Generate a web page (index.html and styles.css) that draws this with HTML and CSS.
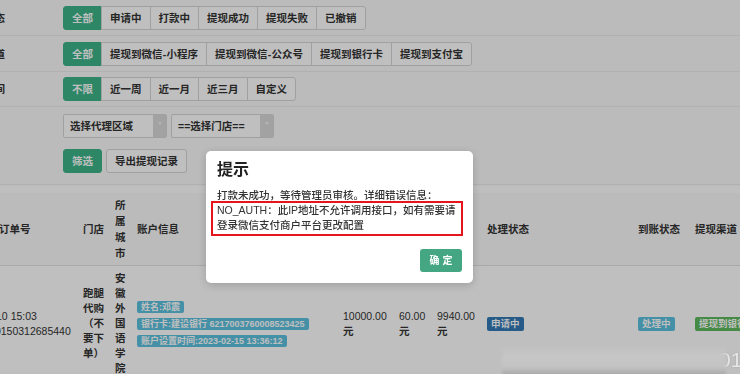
FILE: index.html
```html
<!DOCTYPE html>
<html lang="zh-CN">
<head>
<meta charset="utf-8">
<title>提现记录</title>
<link rel="stylesheet" href="styles.css">
</head>
<body>
<div class="page">
  <div class="filters">
    <div class="frow">
      <div class="flabel">提现状态</div>
      <div class="btn-group">
        <span class="btn active">全部</span>
        <span class="btn">申请中</span>
        <span class="btn">打款中</span>
        <span class="btn">提现成功</span>
        <span class="btn">提现失败</span>
        <span class="btn">已撤销</span>
      </div>
    </div>
    <div class="frow">
      <div class="flabel">提现渠道</div>
      <div class="btn-group">
        <span class="btn active">全部</span>
        <span class="btn">提现到微信<span class="dash">-</span>小程序</span>
        <span class="btn">提现到微信<span class="dash">-</span>公众号</span>
        <span class="btn">提现到银行卡</span>
        <span class="btn">提现到支付宝</span>
      </div>
    </div>
    <div class="frow">
      <div class="flabel">申请时间</div>
      <div class="btn-group">
        <span class="btn active">不限</span>
        <span class="btn">近一周</span>
        <span class="btn">近一月</span>
        <span class="btn">近三月</span>
        <span class="btn">自定义</span>
      </div>
    </div>
    <div class="frow frow-last">
      <div class="flabel"></div>
      <div class="fstack">
        <div class="selects">
          <div class="select"><span class="select-text">选择代理区域</span><span class="select-arrow"><i class="caret"></i></span></div>
          <div class="select"><span class="select-text">==选择门店==</span><span class="select-arrow"><i class="caret"></i></span></div>
        </div>
        <div class="actions">
          <span class="btn btn-green">筛选</span>
          <span class="btn btn-single">导出提现记录</span>
        </div>
      </div>
    </div>
  </div>

  <div class="table-wrap">
    <table class="tbl">
      <colgroup>
        <col class="c1"><col class="c2"><col class="c3"><col class="c4"><col class="c5">
        <col class="c6"><col class="c7"><col class="c8"><col class="c9"><col class="c10">
      </colgroup>
      <thead>
        <tr>
          <th>提现时间/订单号</th>
          <th>门店</th>
          <th>所属城市</th>
          <th>账户信息</th>
          <th>提现金额</th>
          <th>手续费</th>
          <th>实际到账</th>
          <th>处理状态</th>
          <th>到账状态</th>
          <th>提现渠道</th>
        </tr>
      </thead>
      <tbody>
        <tr>
          <td>2023-02-10 15:03<br>20230210150312685440</td>
          <td class="cjk">跑腿代购（不要下单）</td>
          <td class="cjk">安徽外国语学院</td>
          <td>
            <div class="acct">
              <span class="tag tag-info">姓名:邓震</span>
              <span class="tag tag-info">银行卡:建设银行 6217003760008523425</span>
              <span class="tag tag-info">账户设置时间:2023-02-15 13:36:12</span>
            </div>
          </td>
          <td>10000.00<br><span class="cjk">元</span></td>
          <td>60.00<br><span class="cjk">元</span></td>
          <td>9940.00<br><span class="cjk">元</span></td>
          <td><span class="tag tag-lg tag-primary">申请中</span></td>
          <td><span class="tag tag-lg tag-info">处理中</span></td>
          <td><span class="tag tag-lg tag-success">提现到银行卡</span></td>
        </tr>
      </tbody>
    </table>
  </div>
</div>

<div class="backdrop"></div>
<div class="wm">01</div>
<div class="blur-strip"></div>

<div class="modal">
  <div class="modal-title">提示</div>
  <div class="modal-body">
    <div class="msg">打款未成功，等待管理员审核。详细错误信息：</div>
    <div class="msg-box">NO_AUTH：此IP地址不允许调用接口，如有需要请<br>登录微信支付商户平台更改配置</div>
  </div>
  <div class="modal-foot">
    <span class="btn-ok">确 定</span>
  </div>
</div>
</body>
</html>
```

FILE: styles.css
```css
* { box-sizing: border-box; }

html, body {
  margin: 0;
  padding: 0;
  width: 740px;
  height: 374px;
  overflow: hidden;
  background: #fafafa;
  font-family: "Liberation Sans", "Noto Sans CJK SC", sans-serif;
  font-size: 10.5px;
  color: #333;
}

.page {
  width: 740px;
}

.filters {
  padding-top: 0.5px;
}

.frow {
  display: flex;
  align-items: flex-start;
  padding: 5.5px 0 5px;
  border-bottom: 1px solid #ececec;
}

.frow-last {
  padding: 6.5px 0 11px;
}

.flabel {
  width: 5px;
  margin-right: 58px;
  display: flex;
  justify-content: flex-end;
  white-space: nowrap;
  line-height: 24px;
  font-weight: 600;
  flex-shrink: 0;
}

.btn-group {
  display: flex;
}

.btn {
  display: inline-block;
  height: 24px;
  line-height: 22px;
  padding: 0 8px;
  border: 1px solid #d6d6d6;
  background: #ffffff;
  color: #333;
  font-weight: 600;
  white-space: nowrap;
}

.btn-group .btn + .btn {
  margin-left: -1px;
}

.btn-group .btn:first-child {
  border-radius: 3px 0 0 3px;
}

.btn-group .btn:last-child {
  border-radius: 0 3px 3px 0;
}

.btn.active,
.btn-green {
  background: #3cb58a;
  border-color: #3cb58a;
  color: #ffffff;
}

.btn-green,
.btn-single {
  border-radius: 3px;
}

.dash {
  display: inline-block;
  font-family: "Liberation Sans", sans-serif;
  width: 4px;
  text-align: center;
}

.fstack {
  display: flex;
  flex-direction: column;
  gap: 11px;
}

.selects {
  display: flex;
  gap: 4px;
}

.select {
  display: flex;
  width: 104px;
  height: 24px;
  border: 1px solid #d6d6d6;
  background: #ffffff;
  border-radius: 2px;
}

.select + .select {
  width: 103px;
}

.select-text {
  flex: 1;
  line-height: 22px;
  padding-left: 6px;
  font-weight: 600;
  white-space: nowrap;
}

.select-arrow {
  width: 13px;
  background: #d9d9d9;
  display: flex;
  justify-content: center;
  padding-top: 7px;
}

.caret {
  width: 0;
  height: 0;
  border-left: 2px solid transparent;
  border-right: 2px solid transparent;
  border-top: 3px solid #f2f2f2;
}

.actions {
  display: flex;
  gap: 4px;
}

.table-wrap {
  margin-top: 1px;
  background: #ffffff;
  padding-top: 7px;
}

.tbl {
  table-layout: fixed;
  width: 852px;
  margin-left: -52px;
  border-collapse: collapse;
}

.c1 { width: 129px; }
.c2 { width: 32px; }
.c3 { width: 22px; }
.c4 { width: 206px; }
.c5 { width: 56px; }
.c6 { width: 38px; }
.c7 { width: 50px; }
.c8 { width: 151px; }
.c9 { width: 57px; }
.c10 { width: 111px; }

.tbl th {
  background: #fafafa;
  text-align: left;
  font-weight: 600;
  line-height: 16px;
  padding: 4px 5px 4px 6px;
  vertical-align: middle;
  border-bottom: 1px solid #e2e2e2;
  color: #333;
}

.tbl td {
  background: #ffffff;
  line-height: 15px;
  padding: 5.5px 5px 5.5px 6px;
  vertical-align: middle;
  white-space: normal;
  color: #333;
}

.cjk {
  font-weight: 600;
}

.tbl td:first-child,
.tbl th:first-child {
  white-space: nowrap;
}

.acct {
  display: flex;
  flex-direction: column;
  align-items: flex-start;
  gap: 5px;
}

.tag {
  display: inline-block;
  font-size: 9px;
  font-weight: bold;
  line-height: 12px;
  padding: 0 4px;
  border-radius: 2px;
  color: #ffffff;
  white-space: nowrap;
}

.tag-lg {
  font-size: 9.5px;
  line-height: 14px;
}

.tag-info { background: #5bc0de; }
.tag-primary { background: #337ab7; }
.tag-success { background: #5cb85c; }

.backdrop {
  position: fixed;
  inset: 0;
  background: rgba(0, 0, 0, 0.25);
}

.wm {
  position: fixed;
  left: 719px;
  top: 348px;
  font-size: 21px;
  line-height: 24px;
  color: #e6e6e6;
  font-family: "Liberation Sans", sans-serif;
  text-shadow: 0 0 2px rgba(0, 0, 0, 0.15);
}

.blur-strip {
  position: fixed;
  left: 502px;
  top: 346px;
  width: 224px;
  height: 30px;
  background: linear-gradient(to bottom, rgba(196, 196, 196, 0) 0%, #c6c6c6 35%, #c3c3c3 70%, #a3a3a3 100%);
  filter: blur(1.5px);
}

.modal {
  position: fixed;
  left: 206px;
  top: 151px;
  width: 267px;
  background: #ffffff;
  border-radius: 5px;
  padding: 9px 11px 11px;
  box-shadow: 0 2px 10px rgba(0, 0, 0, 0.18);
  color: #333;
}

.modal-title {
  font-size: 16px;
  line-height: 20px;
  font-weight: 600;
  color: #222;
}

.modal-body {
  margin-top: 7.5px;
  line-height: 15px;
  font-size: 10.5px;
  font-weight: 500;
}

.msg {
  white-space: nowrap;
}

.msg-box {
  margin: -1.5px -1px 0 -6px;
  border: 2px solid #e8141c;
  padding: 0 0 1px 4px;
  white-space: nowrap;
}

.modal-foot {
  display: flex;
  justify-content: flex-end;
  margin-top: 13px;
}

.btn-ok {
  display: inline-block;
  width: 42px;
  height: 23px;
  line-height: 23px;
  text-align: center;
  background: #44a683;
  color: #ffffff;
  font-weight: bold;
  font-size: 10px;
  border-radius: 3px;
}
```
